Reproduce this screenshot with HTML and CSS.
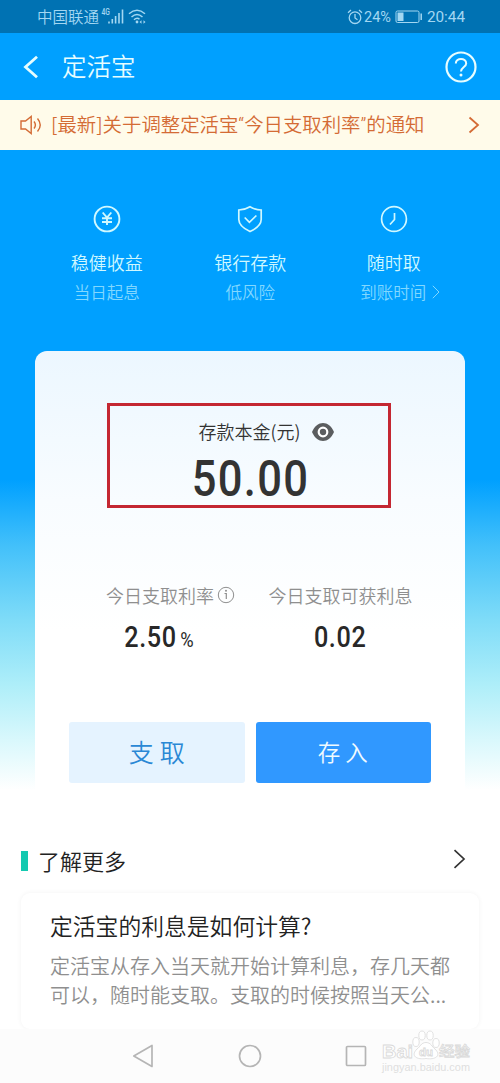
FILE: index.html
```html
<!DOCTYPE html>
<html lang="zh-CN">
<head>
<meta charset="utf-8">
<title>定活宝</title>
<link rel="stylesheet" href="styles.css">
</head>
<body>
<div class="screen">
  <div class="status">
    <span class="carrier">中国联通</span>
    <span class="net">4G</span>
    <svg class="signal" width="16" height="15" viewBox="0 0 16 15"><path d="M1 12.500v2M4.300 10v4.500M7.600 7v7.500M11 4v10.500M14.500 0.500v14" fill="none" stroke="currentColor" stroke-width="1.600"/></svg>
    <svg class="wifi" width="18" height="15" viewBox="0 0 18 15"><path d="M1 4.800Q9-2.200 17 4.800M3.500 8Q9 3 14.500 8M6 10.800Q9 8 11.500 10.300" fill="none" stroke="currentColor" stroke-width="1.500"/><circle cx="9" cy="13" r="1.400" fill="currentColor"/><path d="M11.500 13l2-1.800v3.600zM17.500 13l-2-1.800v3.600z" fill="currentColor"/></svg>
    <svg class="alarm" width="16" height="16" viewBox="0 0 16 16"><g fill="none" stroke="currentColor" stroke-width="1.300"><circle cx="8" cy="8.700" r="5.800"/><path d="M8 5v4l2.500 1.800M1 3.700l3-2.600M15 3.700l-3-2.600"/></g></svg>
    <span class="percent">24%</span>
    <svg class="battery" width="28" height="14" viewBox="0 0 28 14"><rect x="1" y="1" width="23" height="11.500" rx="1.500" fill="none" stroke="currentColor"/><path d="M2.500 2.500h6v8.500h-6z" fill="currentColor"/><path d="M26.200 3.500v6.500" stroke="currentColor" stroke-width="1.500"/></svg>
    <span class="clock">20:44</span>
  </div>

  <div class="header">
    <svg class="back" width="16" height="24" viewBox="0 0 16 24"><path d="M14 1.800L2.500 12 14 22.200" fill="none" stroke="currentColor" stroke-width="2.800"/></svg>
    <h1 class="title">定活宝</h1>
    <svg class="help" width="32" height="32" viewBox="0 0 32 32"><g fill="none" stroke="currentColor"><circle cx="16" cy="16" r="14.500" stroke-width="2.200"/><path d="M10.800 12.500C10.800 6.400 21.200 6.400 21.200 12.500C21.200 16 16 16 16 20.500" stroke-width="2"/></g><circle cx="16" cy="24" r="1.500" fill="currentColor"/></svg>
  </div>

  <div class="notice">
    <svg class="speaker" width="22" height="20" viewBox="0 0 22 20"><g fill="none" stroke="currentColor" stroke-width="1.400"><path d="M1 6h4.500L11.200 1.500v17L5.500 14H1z"/><path d="M14 6.500q2.800 3.500 0 7M17.500 3.500q5.500 6.500 0 13"/></g></svg>
    <span class="notice-text">[最新]关于调整定活宝<span class="quote">“</span>今日支取利率<span class="quote">”</span>的通知</span>
    <svg class="notice-go" width="12" height="18" viewBox="0 0 12 18"><path d="M1.500 1.500L10 9l-8.500 7.500" fill="none" stroke="currentColor" stroke-width="1.800"/></svg>
  </div>

  <div class="hero">
    <div class="features">
      <div class="feature">
        <svg width="28" height="28" viewBox="0 0 28 28"><g fill="none" stroke="currentColor" stroke-width="1.900"><circle cx="14" cy="14" r="12.400"/><path d="M9.700 7.500L14 12.500l4.300-5M14 12.500V20M9 13.200h10M9 17h10"/></g></svg>
        <span class="feature-name">稳健收益</span>
        <span class="feature-sub">当日起息</span>
      </div>
      <div class="feature">
        <svg width="28" height="28" viewBox="0 0 28 28"><g fill="none" stroke="currentColor" stroke-width="1.700"><path d="M14 1.700Q19 4.800 25.200 5V14.500Q25 21.500 14 26.500Q3 21.500 2.800 14.500V5Q9 4.800 14 1.700z"/><path d="M8.700 12.500l4.700 4.800 7-6.800"/></g></svg>
        <span class="feature-name">银行存款</span>
        <span class="feature-sub">低风险</span>
      </div>
      <div class="feature">
        <svg width="28" height="28" viewBox="0 0 28 28"><g fill="none" stroke="currentColor" stroke-width="1.700"><circle cx="14" cy="14" r="12.400"/><path d="M14.500 8v6.500L10 19.500"/></g></svg>
        <span class="feature-name">随时取</span>
        <span class="feature-sub with-arrow">到账时间<svg width="8" height="14" viewBox="0 0 8 14"><path d="M.8.800L7 7 .8 13.200" fill="none" stroke="currentColor"/></svg></span>
      </div>
    </div>

    <div class="card">
      <div class="principal">
        <div class="principal-label"><span>存款本金(元)</span><svg width="22" height="18" viewBox="0 0 22 18"><path d="M0 9C5-3 17-3 22 9C17 21 5 21 0 9z" fill="#5b5d5f"/><circle cx="11" cy="9" r="4.300" fill="none" stroke="#fff" stroke-width="2.200"/></svg></div>
        <div class="amount">50.00</div>
      </div>
      <div class="rates">
        <div class="rate">
          <div class="rate-label with-info">今日支取利率<svg width="18" height="18" viewBox="0 0 18 18"><circle cx="9" cy="9" r="7.700" fill="none" stroke="currentColor"/><path d="M7.500 7.500H9.300V13" fill="none" stroke="currentColor" stroke-width="1.200"/><circle cx="9" cy="4.800" r="1" fill="currentColor"/></svg></div>
          <div class="rate-value">2.50<small>%</small></div>
        </div>
        <div class="rate second">
          <div class="rate-label">今日支取可获利息</div>
          <div class="rate-value">0.02</div>
        </div>
      </div>
      <div class="actions">
        <button class="btn withdraw">支取</button>
        <button class="btn deposit">存入</button>
      </div>
    </div>
  </div>

  <div class="more">
    <i class="mark"></i>
    <h2 class="more-title">了解更多</h2>
    <svg width="13" height="20" viewBox="0 0 13 20"><path d="M1.500 1.200L11 10l-9.500 8.800" fill="none" stroke="currentColor" stroke-width="1.700"/></svg>
  </div>
  <div class="faq">
    <h3 class="faq-title">定活宝的利息是如何计算?</h3>
    <p class="faq-text">定活宝从存入当天就开始计算利息，存几天都<br>可以，随时能支取。支取的时候按照当天公...</p>
  </div>

  <div class="nav">
    <svg class="nav-back" width="22" height="24" viewBox="0 0 22 24"><path d="M20 1.500v21L1.800 12z" fill="none" stroke="currentColor" stroke-width="1.700" stroke-linejoin="round"/></svg>
    <svg class="nav-home" width="24" height="24" viewBox="0 0 24 24"><circle cx="12" cy="12" r="10.500" fill="none" stroke="currentColor" stroke-width="1.700"/></svg>
    <svg class="nav-recent" width="22" height="22" viewBox="0 0 22 22"><rect x="1.500" y="1.500" width="19" height="19" rx="1" fill="none" stroke="currentColor" stroke-width="1.700"/></svg>
    <svg class="watermark" width="94" height="46" viewBox="0 0 94 46">
      <g fill="#fff" stroke="#d9d9d9" stroke-width=".8">
        <text x="1" y="28" class="wm-latin" textLength="31" lengthAdjust="spacingAndGlyphs">Bai</text>
        <ellipse cx="35" cy="12" rx="3.200" ry="4.500"/><ellipse cx="41" cy="5.500" rx="3.200" ry="4.500"/><ellipse cx="49" cy="5.500" rx="3.200" ry="4.500"/><ellipse cx="55" cy="13" rx="3.200" ry="4.500"/>
        <path d="M45 12.500C50 12.500 51 17 54 19C61 26 54 30 45 28.500C36 30 29 26 36 19C39 17 40 12.500 45 12.500z"/>
        <text x="38" y="26" class="wm-du" textLength="14" lengthAdjust="spacingAndGlyphs">du</text>
        <text x="58" y="26" class="wm-cjk" textLength="31" lengthAdjust="spacingAndGlyphs">经验</text>
        <text x="1" y="41" class="wm-url" textLength="88" lengthAdjust="spacingAndGlyphs">jingyan.baidu.com</text>
      </g>
    </svg>
  </div>
</div>
</body>
</html>
```

FILE: styles.css
```css
* { box-sizing: border-box; }
body {
  margin: 0;
  font-family: "Noto Sans CJK SC", sans-serif;
  font-weight: 350;
  background: #fff;
}
h1, h2, h3, p { margin: 0; font-weight: inherit; }
svg { display: block; flex: none; }
.screen { width: 500px; height: 1083px; overflow: hidden; display: flex; flex-direction: column; }

.status {
  height: 33px; flex: none; display: flex; align-items: center;
  padding: 0 35px 0 37px; background: #0072b3; color: #a3d7f2;
  font-size: 15.5px; line-height: 33px;
}
.net { font: 500 9px/9px Roboto, sans-serif; margin: -9px -1px 0 1px; transform: scaleX(.75); }
.signal { margin: 0 4px 0 -2px; }
.alarm { margin-left: auto; }
.percent, .clock { font: 400 15px/33px Roboto, sans-serif; }
.percent { margin: 2px 4px 0 1px; font-size: 14.5px; }
.alarm { margin-right: 0; }
.clock { margin: 2px 0 0 4px; font-size: 15.3px; }
.battery { margin-left: 0; }

.header {
  height: 67px; flex: none; display: flex; align-items: center;
  padding: 0 23px; background: #00a0ff; color: #e6fdff;
}
.title { margin-left: 23px; font-size: 24.5px; line-height: 66px; height: 67px; }
.help { margin-left: auto; }

.notice {
  height: 50px; flex: none; display: flex; align-items: center;
  padding: 0 20px; background: #fffbea; color: #d46b35;
}
.notice-text { margin-left: 9px; font-size: 19.4px; line-height: 50px; white-space: nowrap; }
.quote { font-family: Roboto, sans-serif; }
.notice-go { margin-left: auto; }

.hero {
  height: 650px; flex: none; padding: 55px 35px 0;
  background: linear-gradient(#00a0ff 0, #00a0ff 330px, #42c0fa 395px, #7fdcf8 470px, #aeeef9 535px, #d9f8fc 590px, #fff 640px);
}
.features { display: grid; grid-template-columns: repeat(3, 143.500px); height: 146px; color: #d0f8ff; }
.feature { display: flex; flex-direction: column; align-items: center; }
.feature-name { margin-top: 15px; font-size: 18px; line-height: 28px; }
.feature-sub { margin-top: 2px; font-size: 16.5px; line-height: 28px; color: #82d8ff; }
.with-arrow { display: flex; align-items: center; gap: 6px; padding-left: 13px; }

.card {
  height: 449px; padding: 52px 34px 0; border-radius: 12px 12px 0 0;
  background: linear-gradient(#ecf7ff, #f8fcff 150px, #fff 280px);
}
.principal {
  width: 284px; height: 105px; margin-left: 38px; border: 3px solid #c42732;
  color: #333; display: flex; flex-direction: column; align-items: center;
}
.principal-label { display: flex; align-items: center; gap: 12px; margin: 10px 0 0 35px; font-size: 18px; line-height: 32px; }
.principal-label span { margin-top: -1px; }
.amount { margin-left: 4px; font: 500 50px/64px Roboto, sans-serif; letter-spacing: 1.500px; transform: scaleX(.87); }
.rates { display: flex; margin-top: 72px; }
.rate { width: 175px; margin-left: 3px; display: flex; flex-direction: column; align-items: center; }
.rate.second { margin-left: 6px; }
.rate-label { display: flex; align-items: center; gap: 3px; font-size: 18px; line-height: 30px; color: #8f8f8f; }
.with-info { padding-left: 22px; }
.rate-value { margin-top: 10px; font: 500 29px/34px Roboto, sans-serif; letter-spacing: .7px; color: #282828; transform: scaleX(.87); }
.rate-value small { font-size: 21px; font-weight: 400; margin-left: 4px; }
.actions { display: flex; gap: 11px; margin: 65px 0 0; }
.btn { width: 176px; height: 61px; border: 0; border-radius: 3px; padding: 0 0 3px; font: inherit; line-height: 58px; }
.withdraw { background: #e5f3ff; color: #2a88d5; font-size: 25px; letter-spacing: 6px; padding-left: 6px; }
.deposit { background: #3098ff; color: #f0fbff; font-size: 22.5px; letter-spacing: 5px; padding-left: 4px; }

.more { height: 93px; flex: none; display: flex; align-items: center; padding: 29px 34px 0 21px; color: #333; }
.mark { width: 7px; height: 20px; background: #14c9b0; }
.more-title { margin: -3px 0 0 10px; font-size: 22px; line-height: 40px; color: #222; }
.more svg { margin: -4px 0 0 auto; }
.faq {
  height: 136px; flex: none; margin: 0 21px; padding: 15px 0 0 29px;
  border-radius: 9px; background: #fff; box-shadow: 0 0 5px rgba(0,0,0,.055);
}
.faq-title { font-size: 22.8px; line-height: 36px; color: #222; white-space: nowrap; }
.faq-text { margin-top: 7px; font-size: 20px; line-height: 29px; color: #8f8f8f; white-space: nowrap; }

.nav {
  height: 54px; flex: none; display: flex; align-items: center;
  padding-left: 132px; background: #fcfcfc; color: #b5b5b5;
}
.nav-home { margin-left: 84px; }
.nav-recent { margin-left: 83px; }
.watermark { margin: -6px 0 0 14px; }
.wm-latin { font: 700 19px "Liberation Sans", sans-serif; }
.wm-du { font: 700 11px "Liberation Sans", sans-serif; }
.wm-cjk { font: 500 14px "Noto Sans CJK SC", sans-serif; }
.wm-url { font: 400 10px "Liberation Sans", sans-serif; fill: #dfdfdf; stroke: none; }
```
